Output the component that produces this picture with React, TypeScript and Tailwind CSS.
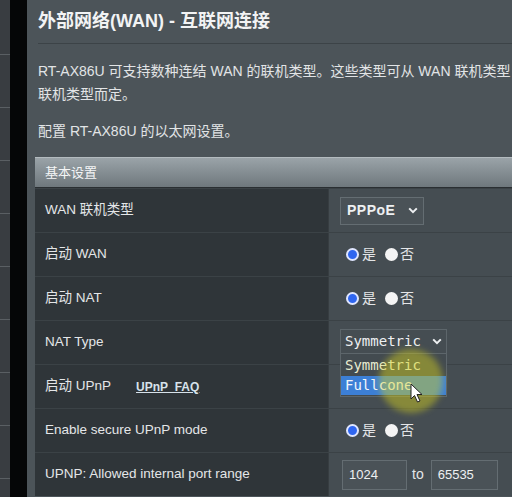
import { ReactNode } from 'react'

const font = { fontFamily: '"Liberation Sans", "Noto Sans CJK SC", sans-serif' }

function Row({ label, children }: { label: ReactNode; children?: ReactNode }) {
  return (
    <div className="flex h-[44px] border-t border-[#3b4246]">
      <div className="w-[293px] shrink-0 bg-[#2f3539] flex items-center pl-[10px] text-[13.5px] text-[#e4e6e8]">
        {label}
      </div>
      <div className="w-[200px] shrink-0 bg-[#454d52] border-l border-[#373d41] flex items-center pl-[11px] text-[13px] text-[#e4e6e8]">
        {children}
      </div>
    </div>
  )
}

function Radios() {
  return (
    <div className="flex items-center ml-[6px]">
      <span className="w-[13px] h-[13px] rounded-full bg-[#2f66f0] border-2 border-[#dfe6ff]" />
      <span className="ml-[3px] text-[14px]">是</span>
      <span className="ml-[9px] w-[13px] h-[13px] rounded-full bg-[#f4f4f4]" />
      <span className="ml-[2px] text-[14px]">否</span>
    </div>
  )
}

function Chevron() {
  return (
    <svg width="10" height="7" viewBox="0 0 10 7" className="shrink-0">
      <path d="M1.2 1.4 L5 5.2 L8.8 1.4" fill="none" stroke="#eef0f2" strokeWidth="2" />
    </svg>
  )
}

export default function App() {
  return (
    <div className="w-[512px] h-[497px] overflow-hidden flex bg-[#4c5459]" style={font}>
      <div className="w-[10px] shrink-0 bg-[#393d41] flex flex-col pt-[2px]">
        {Array.from({ length: 10 }).map((_, i) => (
          <div key={i} className="h-[53px] shrink-0 border-b border-[#5a5f63]" />
        ))}
      </div>
      <div className="w-[17px] shrink-0 bg-[#050607]" />
      <div className="flex-1 min-w-0 pl-[8px] relative overflow-hidden">
        <div className="ml-[3px] pt-[8px] h-[44px] text-[18px] font-bold text-[#f2f3f4] whitespace-nowrap border-b border-[#3c4347]">
          外部网络(WAN) - 互联网连接
        </div>
        <div className="ml-[3px] mt-[16px] text-[14px] leading-[23px] text-[#e2e4e6] whitespace-nowrap">
          <div>RT-AX86U 可支持数种连结 WAN 的联机类型。这些类型可从 WAN 联机类型</div>
          <div>联机类型而定。</div>
          <div className="mt-[14px]">配置 RT-AX86U 的以太网设置。</div>
        </div>

        <div className="mt-[14px] w-[500px]">
          <div className="h-[30px] flex items-center pl-[10px] text-[13px] text-[#f4f5f6] bg-gradient-to-b from-[#9aa3a8] to-[#6f787d] border-t border-[#b3bbbf]">
            基本设置
          </div>
          <div className="border-t border-[#2a2f32]">
            <Row label="WAN 联机类型">
              <div className="w-[84px] h-[28px] border border-[#646d72] bg-[#4a5257] flex items-center justify-between pl-[6px] pr-[5px] text-[14px] font-semibold tracking-[0.5px] text-[#eef0f2]">
                PPPoE
                <Chevron />
              </div>
            </Row>
            <Row label="启动 WAN">
              <Radios />
            </Row>
            <Row label="启动 NAT">
              <Radios />
            </Row>
            <Row label="NAT Type">
              <div className="w-[107px] h-[26px] -mt-[2px] border border-[#5d666b] bg-[#454d52] flex items-center justify-between pl-[4px] pr-[4px] text-[14px] text-[#eef0f2] font-['DejaVu_Sans_Mono',monospace]">
                Symmetric
                <Chevron />
              </div>
            </Row>
            <Row
              label={
                <>
                  启动 UPnP
                  <span className="ml-[25px] text-[12px] font-bold underline text-[#d7e2ea]">UPnP&nbsp;&nbsp;FAQ</span>
                </>
              }
            />
            <Row label="Enable secure UPnP mode">
              <Radios />
            </Row>
            <Row label="UPNP: Allowed internal port range">
              <div className="flex items-center ml-[2px]">
                <div className="w-[65px] h-[30px] border border-[#646d72] bg-[#4a5257] flex items-center pl-[6px] text-[13px] text-[#eef0f2]">
                  1024
                </div>
                <span className="ml-[5px] mr-[7px] text-[14px]">to</span>
                <div className="w-[67px] h-[30px] border border-[#646d72] bg-[#4a5257] flex items-center pl-[6px] text-[13px] text-[#eef0f2]">
                  65535
                </div>
              </div>
            </Row>
          </div>
        </div>

        {/* open dropdown of NAT Type */}
        <div className="absolute left-[313px] top-[353px] w-[107px] border border-[#5d666b] bg-[#434b50] text-[14px] font-['DejaVu_Sans_Mono',monospace] py-[1px]">
          <div className="h-[21px] flex items-center pl-[4px] text-[#e8ecd0]">Symmetric</div>
          <div className="h-[19px] flex items-center pl-[4px] bg-[#3c7fd6] text-[#f2f6fb]">Fullcone</div>
        </div>
        {/* cursor highlight */}
        <div className="absolute left-[352px] top-[349px] w-[64px] h-[64px] rounded-full bg-[#d6d21c]/45 blur-[3px] pointer-events-none" />
        <svg className="absolute left-[383px] top-[383px]" width="14" height="20" viewBox="0 0 14 20">
          <path d="M1 1 L1 16 L4.5 12.5 L7.5 19 L10 18 L7 11.5 L12 11.5 Z" fill="#ffffff" stroke="#222" strokeWidth="1" />
        </svg>
      </div>
    </div>
  )
}
